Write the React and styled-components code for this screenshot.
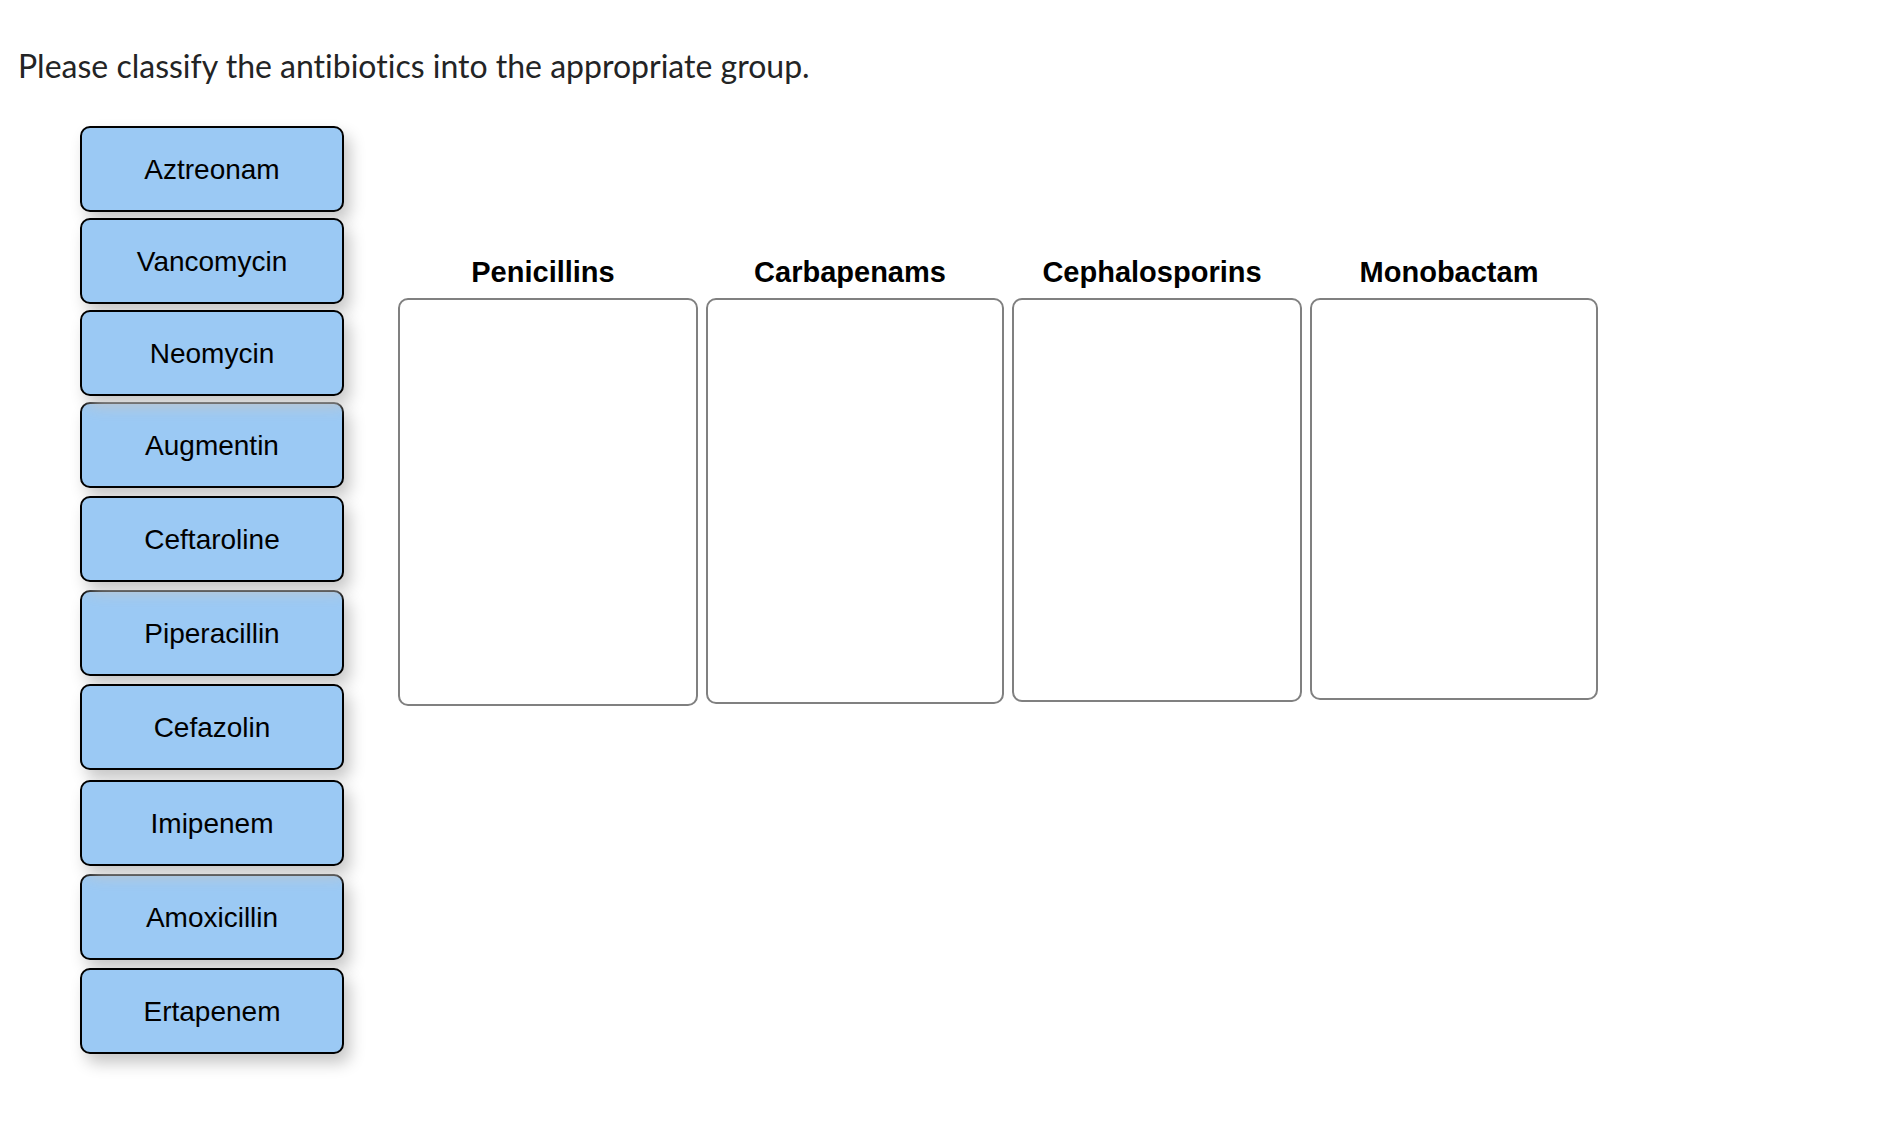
import React from "react";
import styled, { createGlobalStyle } from "styled-components";

const GlobalStyle = createGlobalStyle`
  *, *::before, *::after { box-sizing: border-box; }
  body {
    margin: 0;
    background: #fff;
    color: #000;
    font-family: "Liberation Sans", Arial, sans-serif;
  }
`;

const Page = styled.main`
  padding: 42px 18px 48px;
`;

const Prompt = styled.h1`
  margin: 0;
  color: #232425;
  font: 400 32px/48px Lato, sans-serif;
  font-variant-ligatures: none;
`;

const Exercise = styled.div`
  display: flex;
  align-items: flex-start;
  gap: 54px;
  padding: 36px 0 0 62px;
`;

const Bank = styled.ul`
  display: flex;
  flex-direction: column;
  flex: 0 0 264px;
  margin: 0;
  padding: 0;
  list-style: none;
`;

const BankItem = styled.li`
  position: relative;
  z-index: ${(p) => (p.$raised ? 1 : 0)};
  margin-bottom: ${(p) => p.$space}px;
`;

const Card = styled.button`
  display: block;
  width: 100%;
  height: 86px;
  padding: 2px 0 0;
  border: 2px solid #000;
  border-radius: 10px;
  background: #9bc9f4;
  box-shadow: 6px 9px 16px #c6c6c6;
  color: #000;
  font: 400 28px/32px "Liberation Sans", Arial, sans-serif;
  cursor: grab;
`;

const Groups = styled.div`
  display: flex;
  align-items: flex-start;
  gap: 8px;
  padding-top: 130px;
`;

const Group = styled.section`
  width: ${(p) => p.$width}px;
`;

const GroupTitle = styled.h2`
  margin: 0 0 10px;
  padding-right: 10px;
  text-align: center;
  font-size: 29px;
  line-height: 32px;
  font-weight: 700;
`;

const DropZone = styled.div`
  height: ${(p) => p.$height}px;
  border: 2px solid #808080;
  border-radius: 10px;
`;

const antibiotics = [
  { name: "Aztreonam", space: 6 },
  { name: "Vancomycin", space: 6 },
  { name: "Neomycin", space: 6, raised: true },
  { name: "Augmentin", space: 8 },
  { name: "Ceftaroline", space: 8, raised: true },
  { name: "Piperacillin", space: 8 },
  { name: "Cefazolin", space: 10 },
  { name: "Imipenem", space: 8, raised: true },
  { name: "Amoxicillin", space: 8 },
  { name: "Ertapenem", space: 0 },
];

const groups = [
  { name: "Penicillins", width: 300, height: 408 },
  { name: "Carbapenams", width: 298, height: 406 },
  { name: "Cephalosporins", width: 290, height: 404 },
  { name: "Monobactam", width: 288, height: 402 },
];

export default function App() {
  return (
    <Page>
      <GlobalStyle />
      <Prompt>Please classify the antibiotics into the appropriate group.</Prompt>
      <Exercise>
        <Bank>
          {antibiotics.map((a) => (
            <BankItem key={a.name} $space={a.space} $raised={a.raised}>
              <Card type="button" draggable>
                {a.name}
              </Card>
            </BankItem>
          ))}
        </Bank>
        <Groups>
          {groups.map((g) => (
            <Group key={g.name} $width={g.width} aria-label={g.name}>
              <GroupTitle>{g.name}</GroupTitle>
              <DropZone $height={g.height} />
            </Group>
          ))}
        </Groups>
      </Exercise>
    </Page>
  );
}
